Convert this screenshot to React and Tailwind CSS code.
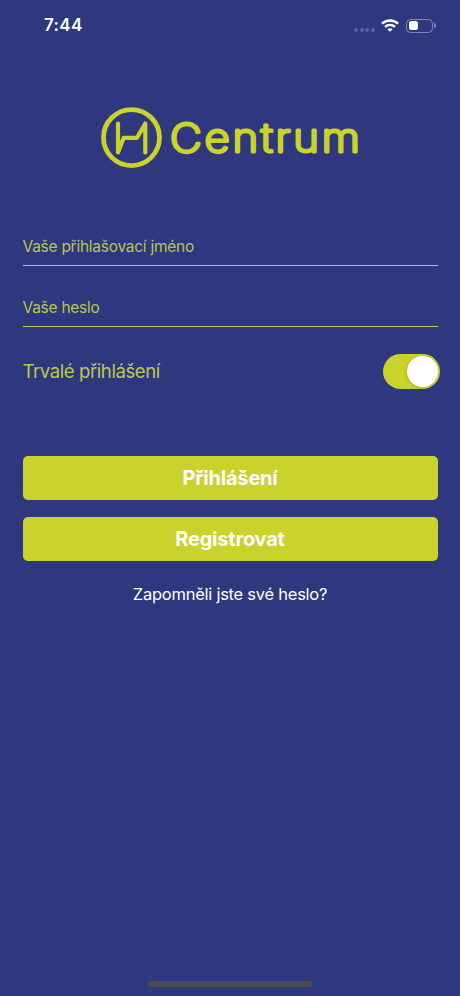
function Logo() {
  return (
    <svg className="h-[62px] w-[264px]" viewBox="0 0 264 62" fill="none" role="img" aria-label="H Centrum">
      <circle cx="31.5" cy="30.6" r="28" stroke="#c9d32b" strokeWidth="4.8" />
      <path
        d="M18 16.5V45.5L23.7 30.8H37L45.3 16.5V45.5"
        stroke="#c9d32b"
        strokeWidth="4.2"
        strokeLinecap="round"
        strokeLinejoin="round"
      />
      <text
        x="70"
        y="45.2"
        textLength="192.5"
        lengthAdjust="spacingAndGlyphs"
        fill="#c9d32b"
        stroke="#c9d32b"
        strokeWidth="3"
        strokeLinejoin="round"
        className="font-['Inter',sans-serif] text-[39.5px] font-extralight tracking-[2.5px]"
      >
        Centrum
      </text>
    </svg>
  );
}

function StatusBar() {
  return (
    <header className="flex h-[51px] items-center justify-between pr-[24px] pl-[44px]">
      <span className="text-[17px] font-semibold tracking-[0.35px]">7:44</span>
      <div className="flex items-center">
        <div className="mt-[9px] -mr-px flex gap-[1.6px]">
          {[0, 1, 2, 3].map((dot) => (
            <span key={dot} className="size-[4px] rounded-full bg-[#5a61a1]" />
          ))}
        </div>
        <svg className="ml-[7px] h-[13px] w-[18px]" viewBox="0 0 18 13" fill="none" stroke="white" strokeWidth="2.5">
          <path d="M1 4.7C5.5 .4 12.5 .4 17 4.7" />
          <path d="M4 7.9C6.9 5.3 11.1 5.3 14 7.9" />
          <path d="M9 12.8L6.4 10.2C7.8 8.9 10.2 8.9 11.6 10.2Z" fill="white" stroke="none" />
        </svg>
        <div className="ml-[7px] h-[14px] w-[27px] rounded-[4.5px] border border-[#8085ba] p-[1.5px]">
          <div className="h-full w-[9px] rounded-[2.5px] bg-white" />
        </div>
        <span className="ml-px h-[5px] w-[2px] rounded-r-full bg-[#8085ba]" />
      </div>
    </header>
  );
}

function Field({ label, type = 'text', className = '' }) {
  return (
    <div className={`border-b border-[#c2c765] ${className}`}>
      <input
        type={type}
        placeholder={label}
        aria-label={label}
        className="block h-[37px] w-full bg-transparent text-[15.5px] tracking-[-0.26px] text-[#c9d32b] outline-none placeholder:text-[#b9c64b] placeholder:opacity-100"
      />
    </div>
  );
}

function Button({ children, className = '' }) {
  return (
    <button
      type="button"
      className={`block h-[44px] w-full rounded-[5px] bg-[#c9d32b] text-[20px] font-bold tracking-[-0.2px] text-white ${className}`}
    >
      {children}
    </button>
  );
}

export default function App() {
  return (
    <div className="flex h-[996px] w-[460px] flex-col bg-[#2f377f] font-['Inter',sans-serif] text-white">
      <StatusBar />
      <main className="flex flex-1 flex-col pr-[22.5px] pl-[22.5px]">
        <div className="mt-[56px] flex pl-[77.5px]">
          <Logo />
        </div>
        <Field label="Vaše přihlašovací jméno" className="mt-[59px]" />
        <Field label="Vaše heslo" type="password" className="mt-[23px]" />
        <div className="mt-[27px] -mr-[2px] flex h-[35px] items-center justify-between">
          <span className="text-[18.5px] tracking-[-0.4px] text-[#bdc94a]">Trvalé přihlášení</span>
          <span role="switch" aria-checked="true" className="flex h-[35px] w-[57px] items-center justify-end rounded-full bg-[#c9d32b] pr-[2px]">
            <span className="size-[31px] rounded-full bg-white shadow-[-1px_1px_3px_rgba(0,0,0,0.15)]" />
          </span>
        </div>
        <Button className="mt-[67px]">Přihlášení</Button>
        <Button className="mt-[17px]">Registrovat</Button>
        <a className="mt-[21px] text-center text-[16.5px] leading-6 tracking-[-0.25px]">Zapomněli jste své heslo?</a>
      </main>
      <div className="mx-auto mb-[9px] h-[6px] w-[164px] rounded-full bg-[#4a4c50]" />
    </div>
  );
}
